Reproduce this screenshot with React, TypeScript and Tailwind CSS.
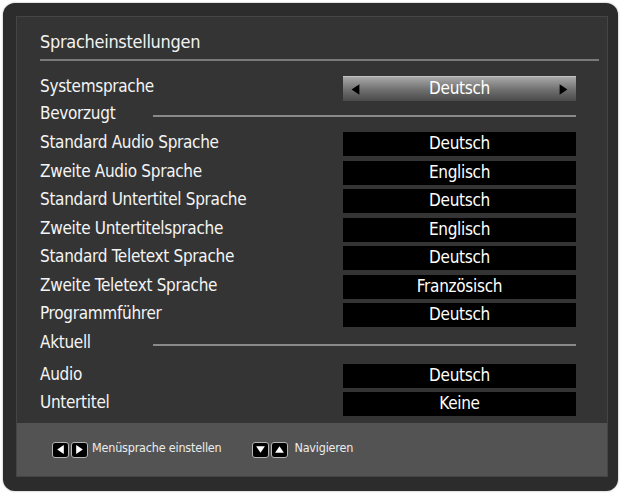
const FONT = '"Liberation Sans Narrow", "DejaVu Sans Condensed", "Liberation Sans", sans-serif'

type Row = { label: string; value: string }

const preferred: Row[] = [
  { label: 'Standard Audio Sprache', value: 'Deutsch' },
  { label: 'Zweite Audio Sprache', value: 'Englisch' },
  { label: 'Standard Untertitel Sprache', value: 'Deutsch' },
  { label: 'Zweite Untertitelsprache', value: 'Englisch' },
  { label: 'Standard Teletext Sprache', value: 'Deutsch' },
  { label: 'Zweite Teletext Sprache', value: 'Französisch' },
  { label: 'Programmführer', value: 'Deutsch' },
]

const current: Row[] = [
  { label: 'Audio', value: 'Deutsch' },
  { label: 'Untertitel', value: 'Keine' },
]

function Tri({ dir, className }: { dir: 'l' | 'r' | 'u' | 'd'; className?: string }) {
  const pts = {
    l: '8,1 8,9 2,5',
    r: '2,1 2,9 8,5',
    u: '1,8 9,8 5,2',
    d: '1,2 9,2 5,8',
  }[dir]
  return (
    <svg viewBox="0 0 10 10" className={className}>
      <polygon points={pts} fill="currentColor" />
    </svg>
  )
}

function Key({ dir }: { dir: 'l' | 'r' | 'u' | 'd' }) {
  return (
    <div className="w-[17px] h-[16px] rounded-[3px] border-[1.5px] border-[#b5b5b5] bg-black flex items-center justify-center text-white">
      <Tri dir={dir} className="w-[11px] h-[11px]" />
    </div>
  )
}

function ValueRow({ label, value }: Row) {
  return (
    <div className="flex items-center h-[24px] mb-[4.5px]">
      <div className="flex-1 text-[17px] tracking-[-0.3px] text-[#f4f4f4] -mt-[2px]">{label}</div>
      <div className="w-[233px] h-[24px] bg-black flex items-center justify-center text-[17px] tracking-[-0.3px] text-white">
        {value}
      </div>
    </div>
  )
}

function Section({ label }: { label: string }) {
  return (
    <div className="flex items-center h-[26px]">
      <div className="w-[113px] text-[17px] tracking-[-0.3px] text-[#f4f4f4]">{label}</div>
      <div className="flex-1 h-[2px] mt-[4px] bg-[#8a8a8a]" />
    </div>
  )
}

export default function App() {
  return (
    <div className="w-[622px] h-[494px] bg-white pt-[3px] pl-[3px]" style={{ fontFamily: FONT }}>
      <div className="w-[615px] h-[488px] rounded-[12px] bg-[#2c2c2c] pt-[13px] pl-[13px] pr-[10px] pb-[14px] shadow-[0_0_2px_rgba(0,0,0,0.4)]">
        <div className="h-full border border-[#454545] bg-[#343434] flex flex-col">
          <div className="flex-1 pl-[23px] pr-[8px]">
            <div className="pt-[13px] h-[44px] border-b-2 border-[#7a7a7a] text-[18px] tracking-[-0.3px] text-[#f2f2f2] leading-[24px]">
              Spracheinstellungen
            </div>

            <div className="pr-[23px]">
              <div className="flex items-center h-[25px] mt-[15px]">
                <div className="flex-1 text-[17px] tracking-[-0.3px] text-[#f4f4f4] -mt-[3px]">Systemsprache</div>
                <div className="w-[233px] h-[25px] flex items-center justify-between px-[6px] text-black bg-[linear-gradient(#a8a8a8,#6e6e6e_55%,#4a4a4a)] border-t border-[#c4c4c4]">
                  <Tri dir="l" className="w-[13px] h-[13px]" />
                  <span className="text-[17px] tracking-[-0.3px] text-white">Deutsch</span>
                  <Tri dir="r" className="w-[13px] h-[13px]" />
                </div>
              </div>

              <Section label="Bevorzugt" />
              <div className="h-[5px]" />

              {preferred.map((r) => (
                <ValueRow key={r.label} {...r} />
              ))}

              <div className="-mt-[2px]">
                <Section label="Aktuell" />
              </div>
              <div className="h-[8px]" />

              {current.map((r) => (
                <ValueRow key={r.label} {...r} />
              ))}
            </div>
          </div>

          <div className="h-[53px] bg-[#535353] flex items-center pl-[35px] text-[12.5px] tracking-[-0.2px] text-[#ececec]">
            <div className="flex items-center gap-[2px]">
              <Key dir="l" />
              <Key dir="r" />
            </div>
            <span className="ml-[4px] -mt-[3px]">Menüsprache einstellen</span>
            <div className="flex items-center gap-[2px] ml-[31px]">
              <Key dir="d" />
              <Key dir="u" />
            </div>
            <span className="ml-[6px] -mt-[3px]">Navigieren</span>
          </div>
        </div>
      </div>
    </div>
  )
}
